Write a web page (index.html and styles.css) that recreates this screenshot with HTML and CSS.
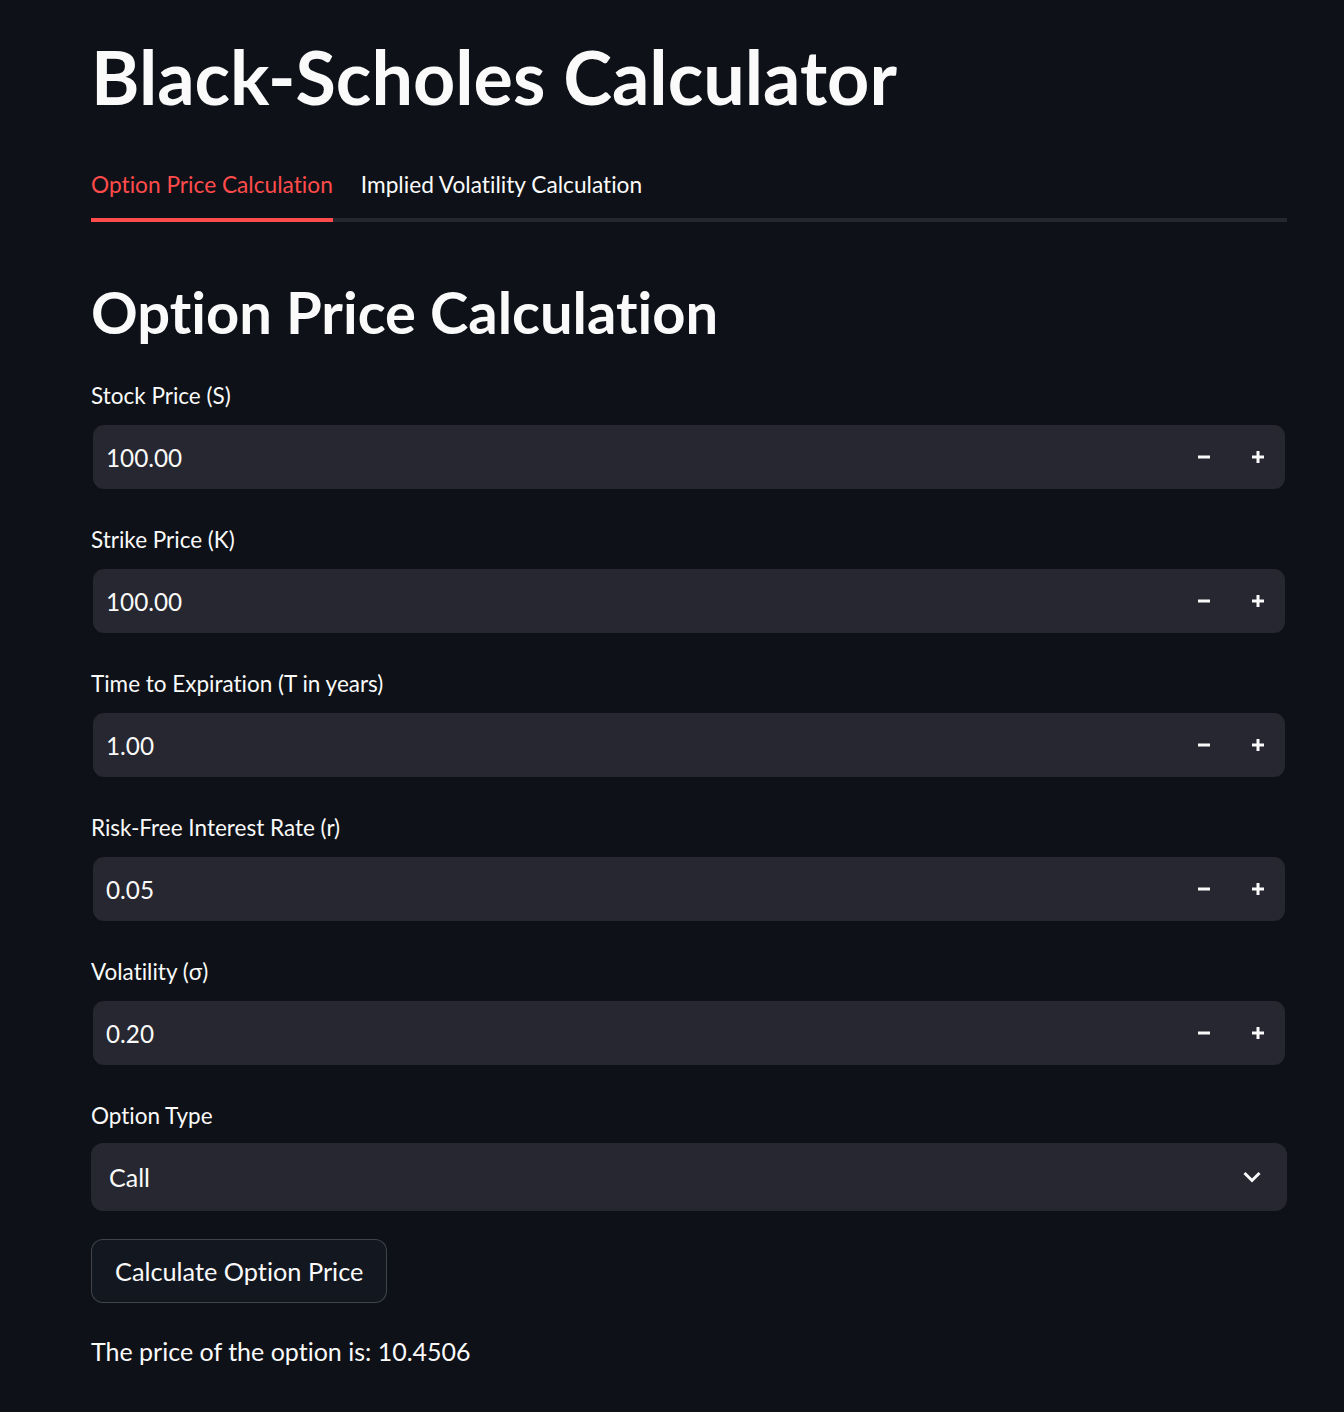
FILE: index.html
```html
<!DOCTYPE html>
<html lang="en">
<head>
<meta charset="utf-8">
<title>Black-Scholes Calculator</title>
<link rel="stylesheet" href="styles.css">
</head>
<body>
<main class="container">
  <h1 class="title">Black-Scholes Calculator</h1>

  <div class="tabs">
    <div class="tab tab-active">Option Price Calculation</div>
    <div class="tab">Implied Volatility Calculation</div>
  </div>

  <h2 class="heading">Option Price Calculation</h2>

  <div class="field">
    <label class="label">Stock Price (S)</label>
    <div class="number-input">
      <span class="value">100.00</span>
      <span class="step"><svg width="14" height="14" viewBox="0 0 14 14"><path d="M1 7h12" stroke="#fafafa" stroke-width="3"/></svg></span>
      <span class="step"><svg width="14" height="14" viewBox="0 0 14 14"><path d="M1 7h12M7 1v12" stroke="#fafafa" stroke-width="3"/></svg></span>
    </div>
  </div>

  <div class="field">
    <label class="label">Strike Price (K)</label>
    <div class="number-input">
      <span class="value">100.00</span>
      <span class="step"><svg width="14" height="14" viewBox="0 0 14 14"><path d="M1 7h12" stroke="#fafafa" stroke-width="3"/></svg></span>
      <span class="step"><svg width="14" height="14" viewBox="0 0 14 14"><path d="M1 7h12M7 1v12" stroke="#fafafa" stroke-width="3"/></svg></span>
    </div>
  </div>

  <div class="field">
    <label class="label">Time to Expiration (T in years)</label>
    <div class="number-input">
      <span class="value">1.00</span>
      <span class="step"><svg width="14" height="14" viewBox="0 0 14 14"><path d="M1 7h12" stroke="#fafafa" stroke-width="3"/></svg></span>
      <span class="step"><svg width="14" height="14" viewBox="0 0 14 14"><path d="M1 7h12M7 1v12" stroke="#fafafa" stroke-width="3"/></svg></span>
    </div>
  </div>

  <div class="field">
    <label class="label">Risk-Free Interest Rate (r)</label>
    <div class="number-input">
      <span class="value">0.05</span>
      <span class="step"><svg width="14" height="14" viewBox="0 0 14 14"><path d="M1 7h12" stroke="#fafafa" stroke-width="3"/></svg></span>
      <span class="step"><svg width="14" height="14" viewBox="0 0 14 14"><path d="M1 7h12M7 1v12" stroke="#fafafa" stroke-width="3"/></svg></span>
    </div>
  </div>

  <div class="field">
    <label class="label">Volatility (σ)</label>
    <div class="number-input">
      <span class="value">0.20</span>
      <span class="step"><svg width="14" height="14" viewBox="0 0 14 14"><path d="M1 7h12" stroke="#fafafa" stroke-width="3"/></svg></span>
      <span class="step"><svg width="14" height="14" viewBox="0 0 14 14"><path d="M1 7h12M7 1v12" stroke="#fafafa" stroke-width="3"/></svg></span>
    </div>
  </div>

  <div class="field field-select">
    <label class="label label-select">Option Type</label>
    <div class="select">
      <span class="select-value">Call</span>
      <svg class="chevron" width="18" height="12" viewBox="0 0 18 12"><path d="M1.5 2 9 9.5 16.5 2" fill="none" stroke="#fafafa" stroke-width="3"/></svg>
    </div>
  </div>

  <button class="button" type="button">Calculate Option Price</button>

  <p class="result">The price of the option is: 10.4506</p>
</main>
</body>
</html>
```
FILE: styles.css
```css
* { box-sizing: border-box; }

html, body {
  margin: 0;
  padding: 0;
  background: #0e1117;
}

body {
  color: #fafafa;
  font-family: "Lato", "Noto Sans", sans-serif;
  font-variant-ligatures: none;
  font-feature-settings: "liga" 0, "clig" 0;
}

.container {
  width: 1196px;
  margin-left: 91px;
  padding-top: 33px;
}

.title {
  margin: 0;
  font-size: 73.7px;
  line-height: 88px;
  font-weight: 700;
}

.tabs {
  display: flex;
  gap: 28px;
  margin-top: 50px;
  border-bottom: 4px solid #262730;
}

.tab {
  font-size: 22.7px;
  line-height: 27px;
  padding-bottom: 20px;
  color: #fafafa;
}

.tab-active {
  color: #ff4b4b;
  border-bottom: 4px solid #ff4b4b;
  margin-bottom: -4px;
}

.heading {
  margin: 55px 0 0;
  font-size: 57.9px;
  line-height: 70px;
  font-weight: 700;
}

.field {
  margin-top: 36px;
}

.field + .field {
  margin-top: 38px;
}

.label {
  display: block;
  font-size: 22.5px;
  line-height: 26px;
  margin-bottom: 16px;
}

.label-select {
  margin-bottom: 14px;
}

.number-input {
  display: flex;
  align-items: center;
  height: 64px;
  margin: 0 2px;
  background: #262730;
  border-radius: 11px;
}

.value {
  flex: 1;
  padding-left: 13px;
  font-size: 24.3px;
}

.step {
  display: flex;
  align-items: center;
  justify-content: center;
  width: 54px;
  height: 100%;
}

.step svg { display: block; }

.select {
  display: flex;
  align-items: center;
  justify-content: space-between;
  height: 68px;
  background: #262730;
  border-radius: 12px;
  padding: 0 26px 0 18px;
}

.select-value {
  font-size: 25px;
}

.chevron { display: block; }

.button {
  display: inline-flex;
  align-items: center;
  height: 64px;
  margin-top: 28px;
  padding: 0 23px;
  background: #131720;
  color: #fafafa;
  border: 1px solid rgba(250, 250, 250, 0.2);
  border-radius: 12px;
  font-family: "Lato", "Noto Sans", sans-serif;
  font-variant-ligatures: none;
  font-size: 25.3px;
}

.result {
  margin: 33px 0 0;
  font-size: 25px;
  line-height: 30px;
}
```
